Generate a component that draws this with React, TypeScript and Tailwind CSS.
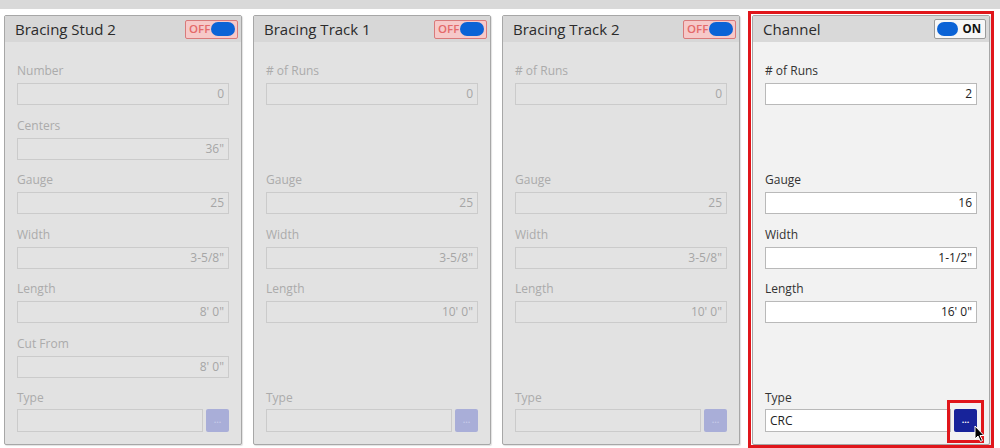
import React from "react";

type Row = { label: string; value: string } | null;

const FONT = { fontFamily: '"Open Sans", "Noto Sans", Arial, sans-serif' };

function Toggle({ on }: { on: boolean }) {
  if (on) {
    return (
      <div className="flex items-center h-[20px] w-[52px] border border-[#9a9a9a] bg-[#f7f7f7] rounded-[2px] pl-[2px] pr-[4px] gap-[4px]">
        <div className="h-[14px] w-[23px] rounded-full bg-[#0b63d6]" />
        <span className="text-[11.5px] font-bold text-[#111] leading-none">ON</span>
      </div>
    );
  }
  return (
    <div className="flex items-center h-[19px] w-[53px] border border-[#d97a7a] bg-[#f6c9c9] rounded-[2px] pl-[3px] pr-[2px] gap-[1px]">
      <span className="text-[11.5px] font-semibold text-[#e46a6a] leading-none">OFF</span>
      <div className="h-[14px] w-[24px] rounded-full bg-[#0b63d6]" />
    </div>
  );
}

function Panel({ title, on, rows, type }: { title: string; on: boolean; rows: Row[]; type: string }) {
  const labelC = on ? "text-[#333]" : "text-[#ababab]";
  const valC = on ? "text-[#222]" : "text-[#a6a6a6]";
  const inputC = on ? "bg-white border-[#b9b9b9]" : "bg-[#e3e3e3] border-[#cbcbcb]";
  return (
    <div
      className={`w-[238px] h-[430px] border border-[#a7a7a7] rounded-[2px] flex flex-col shadow-[1px_1px_1px_rgba(0,0,0,0.12)] ${
        on ? "bg-[#f2f2f2]" : "bg-[#e2e2e2]"
      }`}
    >
      <div className={`h-[26px] flex items-center justify-between pl-[10px] pr-[3px] ${on ? "bg-[#d9d9d9]" : "bg-[#d7d7d7]"}`}>
        <span className="text-[15px] text-[#2b2b2b] leading-none">{title}</span>
        <Toggle on={on} />
      </div>
      <div className="flex flex-col pt-[21px] px-[12px]">
        {rows.map((r, i) => (
          <div key={i} className="h-[54.5px] flex flex-col">
            {r && (
              <>
                <div className={`h-[16px] text-[12px] leading-[16px] ${labelC}`}>{r.label}</div>
                <div
                  className={`mt-[4px] h-[22px] border flex items-center justify-end pr-[4px] text-[12px] ${inputC} ${valC}`}
                >
                  {r.value}
                </div>
              </>
            )}
          </div>
        ))}
        <div className="flex flex-col">
          <div className={`h-[16px] text-[12px] leading-[16px] ${labelC}`}>Type</div>
          <div className="mt-[3px] flex items-center gap-[3px]">
            <div className={`flex-1 h-[23px] border flex items-center pl-[4px] text-[12px] ${inputC} ${valC}`}>{type}</div>
            <div className="relative">
              <div
                className={`w-[23px] h-[23px] rounded-[2px] flex items-center justify-center text-[9px] font-bold leading-none pb-[3px] ${
                  on ? "bg-[#17239a] text-white" : "bg-[#a9aed8] text-[#c5c9e8]"
                }`}
              >
                ...
              </div>
              {on && (
                <>
                  <div className="absolute left-[-7px] top-[-9px] w-[37px] h-[43px] border-[3px] border-[#e0161b] pointer-events-none" />
                  <svg className="absolute left-[20px] top-[16px]" width="12" height="18" viewBox="0 0 12 18">
                    <path d="M1 1 L1 14 L4 11 L6.5 16.5 L8.5 15.5 L6 10.5 L10 10.5 Z" fill="#000" stroke="#fff" strokeWidth="1" />
                  </svg>
                </>
              )}
            </div>
          </div>
        </div>
      </div>
    </div>
  );
}

export default function App() {
  const stud: Row[] = [
    { label: "Number", value: "0" },
    { label: "Centers", value: '36"' },
    { label: "Gauge", value: "25" },
    { label: "Width", value: '3-5/8"' },
    { label: "Length", value: "8' 0\"" },
    { label: "Cut From", value: "8' 0\"" },
  ];
  const track: Row[] = [
    { label: "# of Runs", value: "0" },
    null,
    { label: "Gauge", value: "25" },
    { label: "Width", value: '3-5/8"' },
    { label: "Length", value: "10' 0\"" },
    null,
  ];
  const channel: Row[] = [
    { label: "# of Runs", value: "2" },
    null,
    { label: "Gauge", value: "16" },
    { label: "Width", value: '1-1/2"' },
    { label: "Length", value: "16' 0\"" },
    null,
  ];
  return (
    <div className="w-[1000px] h-[448px] bg-white overflow-hidden" style={FONT}>
      <div className="h-[9px] bg-[#d9d9d9]" />
      <div className="flex gap-[11px] pl-[4px] pt-[6px]">
        <Panel title="Bracing Stud 2" on={false} rows={stud} type="" />
        <Panel title="Bracing Track 1" on={false} rows={track} type="" />
        <Panel title="Bracing Track 2" on={false} rows={track} type="" />
        <div className="relative ml-[1px]">
          <Panel title="Channel" on={true} rows={channel} type="CRC" />
          <div className="absolute left-[-4px] right-[-4px] top-[-4px] bottom-[-3px] border-[3px] border-[#e0161b] pointer-events-none" />
        </div>
      </div>
    </div>
  );
}
